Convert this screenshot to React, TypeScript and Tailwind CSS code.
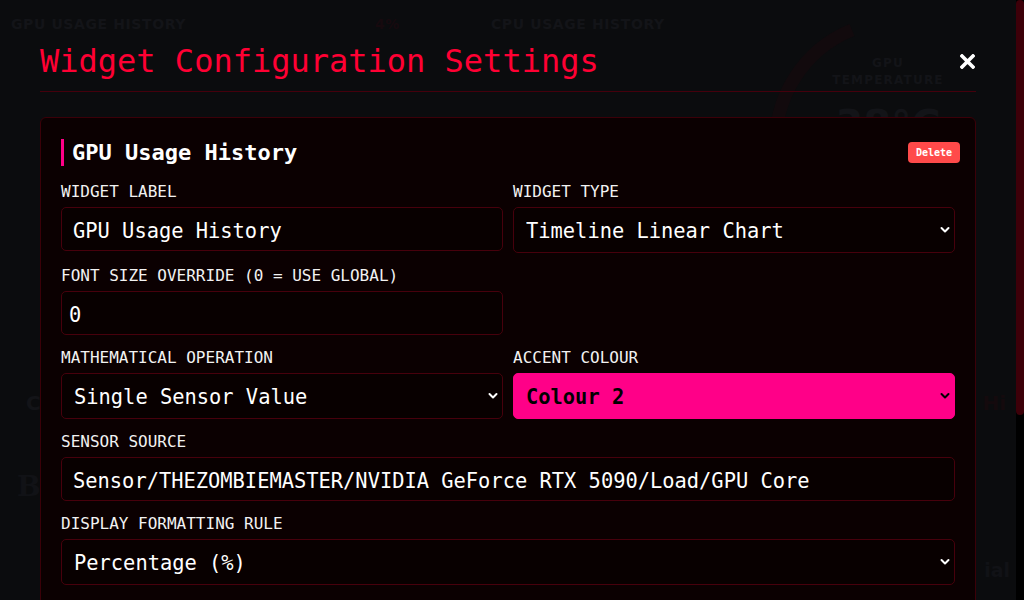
import React from "react";

const Chevron = ({ dark = false }: { dark?: boolean }) => (
  <svg
    width="10"
    height="7"
    viewBox="0 0 10 7"
    className="pointer-events-none absolute right-[5px] top-1/2 -translate-y-1/2"
  >
    <path
      d="M1.5 1.5 L5 5 L8.5 1.5"
      fill="none"
      stroke={dark ? "#000000" : "#ffffff"}
      strokeWidth="2"
      strokeLinecap="round"
      strokeLinejoin="round"
    />
  </svg>
);

const Label = ({ children }: { children: React.ReactNode }) => (
  <label className="mb-[5px] block text-[16px] leading-[20px] text-[#f2f2f2]">{children}</label>
);

const inputCls =
  "h-[44px] w-full rounded-[5px] border border-[#47000c] bg-[#080000] pr-3 pt-[4px] text-[20.4px] text-white outline-none font-['DejaVu_Sans_Mono',monospace]";

const selectCls =
  "h-[46px] w-full appearance-none rounded-[5px] border px-3 pt-[2px] text-[20.4px] outline-none font-['DejaVu_Sans_Mono',monospace]";

function SelectField({
  value,
  options,
  accent = false,
}: {
  value: string;
  options: string[];
  accent?: boolean;
}) {
  return (
    <div className="relative">
      <select
        defaultValue={value}
        className={
          selectCls +
          (accent
            ? " border-[#ff0088] bg-[#ff0088] font-bold text-black"
            : " border-[#47000c] bg-[#080000] text-white")
        }
      >
        {options.map((o) => (
          <option key={o} value={o}>
            {o}
          </option>
        ))}
      </select>
      <Chevron dark={accent} />
    </div>
  );
}

export default function App() {
  return (
    <div className="relative h-[600px] w-[1024px] overflow-hidden bg-[#0b0c0e] font-['DejaVu_Sans_Mono',monospace]">
      {/* dimmed dashboard behind the modal */}
      <div className="flex flex-col font-['DejaVu_Sans',sans-serif] font-bold text-[#131418]">
        <div className="flex h-[388px]">
          <div className="flex w-[400px] items-start justify-between pl-[11px] pt-[14px] text-[14px] tracking-[0.6px]">
            <span>GPU USAGE HISTORY</span>
            <span className="text-[#170a0e]">4%</span>
          </div>
          <div className="w-[360px] pl-[91px] pt-[14px] text-[14px] tracking-[0.6px]">CPU USAGE HISTORY</div>
          <div className="relative flex-1">
            <svg width="264" height="300" className="absolute left-0 top-0">
              <path
                d="M 16 150 A 122 122 0 0 1 92 30"
                fill="none"
                stroke="#120a0d"
                strokeWidth="13"
              />
            </svg>
            <div className="relative flex flex-col items-center pr-[8px] pt-[55px] text-[12px] leading-[17px] tracking-[1.2px]">
              <span>GPU</span>
              <span>TEMPERATURE</span>
              <span className="mt-[14px] text-[40px] leading-[44px] tracking-normal">38°C</span>
            </div>
          </div>
        </div>
        <div className="flex justify-between pl-[26px] pr-[18px] text-[20px]">
          <span>C</span>
          <span className="text-[#140a0d]">Hi</span>
        </div>
        <div className="flex justify-between px-[17px] pt-[48px] font-['DejaVu_Serif',serif] text-[28px] text-[#111216]">
          <span>BT</span>
        </div>
        <div className="flex justify-end pr-[14px] pt-[48px] text-[19px] text-[#111216]">
          <span>ial</span>
        </div>
      </div>

      {/* modal */}
      <div className="absolute inset-0 flex">
        <div className="min-w-0 flex-1 overflow-hidden">
          <div className="px-10 pt-[41px]">
            <div className="flex items-center justify-between border-b border-[#45000c] pb-[10px]">
              <h1 className="text-[32px] leading-[40px] text-[#ff0033]">Widget Configuration Settings</h1>
              <svg width="15" height="15" viewBox="0 0 15 15" className="mr-[1px]">
                <path d="M2 2 L13 13 M13 2 L2 13" stroke="#ffffff" strokeWidth="3.6" strokeLinecap="square" />
              </svg>
            </div>

            <div className="mt-[25px] rounded-[6px] border border-[#3b0008] bg-[#0b0001] p-5">
              <div className="mb-[16px] flex items-center justify-between pt-[1px]">
                <h2 className="border-l-[3px] border-[#ff0088] pl-2 text-[22px] font-bold leading-[27px] text-white">
                  GPU Usage History
                </h2>
                <button className="-mr-[5px] rounded-[4px] bg-[#ff4a4a] px-[8px] text-[10px] font-bold leading-[21px] text-white">
                  Delete
                </button>
              </div>

              <div className="grid grid-cols-2 gap-x-[10px] gap-y-[13px]">
                <div>
                  <Label>WIDGET LABEL</Label>
                  <input className={inputCls + " pl-[11px]"} defaultValue="GPU Usage History" />
                </div>
                <div>
                  <Label>WIDGET TYPE</Label>
                  <SelectField
                    value="Timeline Linear Chart"
                    options={["Timeline Linear Chart", "Radial Gauge", "Text Value"]}
                  />
                </div>

                <div>
                  <Label>FONT SIZE OVERRIDE (0 = USE GLOBAL)</Label>
                  <input className={inputCls + " pl-[7px]"} defaultValue="0" />
                </div>
                <div />

                <div>
                  <Label>MATHEMATICAL OPERATION</Label>
                  <SelectField
                    value="Single Sensor Value"
                    options={["Single Sensor Value", "Sum", "Average"]}
                  />
                </div>
                <div>
                  <Label>ACCENT COLOUR</Label>
                  <SelectField value="Colour 2" options={["Colour 1", "Colour 2", "Colour 3"]} accent />
                </div>

                <div className="col-span-2">
                  <Label>SENSOR SOURCE</Label>
                  <input
                    className={inputCls + " pl-[11px]"}
                    defaultValue="Sensor/THEZOMBIEMASTER/NVIDIA GeForce RTX 5090/Load/GPU Core"
                  />
                </div>

                <div className="col-span-2">
                  <Label>DISPLAY FORMATTING RULE</Label>
                  <SelectField
                    value="Percentage (%)"
                    options={["Percentage (%)", "Temperature (°C)", "Raw Value"]}
                  />
                </div>
              </div>
            </div>
          </div>
        </div>

        {/* scrollbar */}
        <div className="w-[8px] bg-black">
          <div className="h-[415px] rounded-[4px] bg-[#3d0009]" />
        </div>
      </div>
    </div>
  );
}
